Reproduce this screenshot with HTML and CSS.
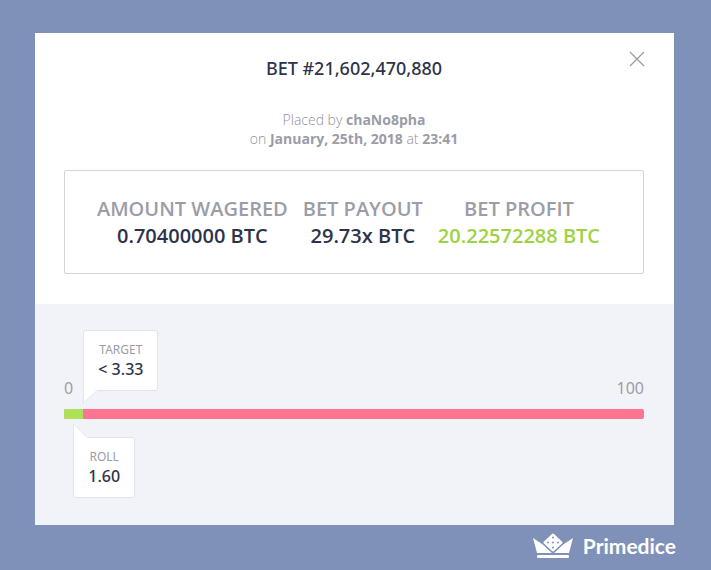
FILE: index.html
```html
<!DOCTYPE html>
<html lang="en">
<head>
    <meta charset="UTF-8">
    <meta name="viewport" content="width=device-width, initial-scale=1.0">
    <title>Primedice - Bet #21,602,470,880</title>
    <link rel="stylesheet" href="styles.css">
</head>
<body>
    <main class="modal">
        <div class="details">
            <button class="close" type="button" aria-label="Close">
                <svg width="16" height="16" viewBox="0 0 16 16"><path d="M1 1L15 15M15 1L1 15" fill="none" stroke="#9699a6" stroke-width="1.2"/></svg>
            </button>
            <h1>BET #21,602,470,880</h1>
            <p class="placed">
                Placed by <b>chaNo8pha</b><br>
                on <b>January, 25th, 2018</b> at <b>23:41</b>
            </p>
            <dl class="stats">
                <div>
                    <dt>AMOUNT WAGERED</dt>
                    <dd>0.70400000 BTC</dd>
                </div>
                <div>
                    <dt>BET PAYOUT</dt>
                    <dd>29.73x BTC</dd>
                </div>
                <div>
                    <dt>BET PROFIT</dt>
                    <dd class="profit">20.22572288 BTC</dd>
                </div>
            </dl>
        </div>
        <div class="roll-area">
            <div class="scale">
                <span>0</span>
                <span>100</span>
            </div>
            <div class="track">
                <div class="bar">
                    <div class="win" style="width: 3.33%"></div>
                </div>
                <div class="callout target" style="left: 3.33%">
                    <span>TARGET</span>
                    <strong>&lt; 3.33</strong>
                    <svg class="tail" width="14" height="14" viewBox="0 0 14 14"><path d="M0 0H14V1L0.500 13.500Z" fill="#fff"/><path d="M0.500 0V13L13.500 1" fill="none" stroke="#e2e4eb"/></svg>
                </div>
                <div class="callout roll" style="left: 1.6%">
                    <span>ROLL</span>
                    <strong>1.60</strong>
                    <svg class="tail" width="14" height="15" viewBox="0 0 14 15"><path d="M0 15H14V14L0.500 0.500Z" fill="#fff"/><path d="M0.500 15V1L13.500 14" fill="none" stroke="#e2e4eb"/></svg>
                </div>
            </div>
        </div>
    </main>
    <footer class="brand">
        <svg width="40" height="26" viewBox="0 0 40 26" fill="#fff">
            <path d="M0 5L12 13Q20 24 28 13L40 5L36 20H4Z"/>
            <path d="M20 1L29.500 10L20 19L10.500 10Z" fill="#8091b9" stroke="#8091b9" stroke-width="3" stroke-linejoin="round"/>
            <path d="M20 2L28 9.500L20 17L12 9.500Z" stroke="#fff" stroke-width="3" stroke-linejoin="round"/>
            <g fill="#8091b9">
                <circle cx="20" cy="4.500" r="1"/>
                <circle cx="15" cy="9.500" r="1"/>
                <circle cx="20" cy="9.500" r="1"/>
                <circle cx="25" cy="9.500" r="1"/>
                <circle cx="20" cy="14.500" r="1"/>
            </g>
            <rect x="4" y="22" width="32" height="3" rx="1"/>
        </svg>
        <span>Primedice</span>
    </footer>
</body>
</html>
```
FILE: styles.css
```css
* {
    box-sizing: border-box;
}
body {
    font-family: "Noto Sans", "Open Sans", sans-serif;
    background-color: #8091b9;
    color: #2f3349;
    margin: 0;
    padding: 33px 37px 0 35px;
}
.modal {
    background-color: #fff;
}
.details {
    position: relative;
    padding: 23px 30px 30px 29px;
    text-align: center;
}
.close {
    position: absolute;
    top: 18px;
    right: 29px;
    width: 16px;
    height: 16px;
    padding: 0;
    border: none;
    background: none;
    cursor: pointer;
}
.close svg {
    display: block;
}
h1 {
    margin: 0;
    font-size: 18px;
    font-weight: 500;
    line-height: 24px;
}
.placed {
    margin: 30px 0 22px;
    font-family: "Open Sans", sans-serif;
    font-size: 14px;
    font-weight: 300;
    line-height: 19px;
    color: #8f929d;
}
.placed b {
    font-weight: 700;
    color: #9a9ca7;
}
.stats {
    display: flex;
    justify-content: center;
    gap: 15px;
    margin: 0;
    padding: 24px 11px 24px 0;
    border: 1px solid #d3d4d9;
    border-radius: 2px;
    font-family: "Open Sans", sans-serif;
    font-size: 20px;
    font-weight: 600;
    line-height: 27px;
}
.stats dt {
    color: #9b9da7;
}
.stats dd {
    margin: 0;
}
.stats .profit {
    color: #9dd343;
}

/* Roll bar */
.roll-area {
    padding: 72px 30px 106px 29px;
    background-color: #f2f3f8;
}
.scale {
    display: flex;
    justify-content: space-between;
    margin-bottom: 9px;
    font-size: 16px;
    line-height: 24px;
    color: #9b9da7;
}
.track {
    position: relative;
}
.bar {
    height: 10px;
    border-radius: 2px;
    background-color: #ff7591;
    overflow: hidden;
}
.win {
    height: 100%;
    background-color: #aee05a;
}
.callout {
    position: absolute;
    padding: 9px 14px 11px;
    border: 1px solid #e2e4eb;
    border-radius: 3px;
    background-color: #fff;
    text-align: center;
    white-space: nowrap;
}
.callout span,
.callout strong {
    display: block;
}
.callout span {
    font-size: 12px;
    line-height: 20px;
    color: #9b9da7;
}
.callout strong {
    font-size: 16px;
    font-weight: 500;
    line-height: 19px;
}
.tail {
    position: absolute;
    left: -1px;
}
.target {
    bottom: 28px;
    border-bottom-left-radius: 0;
}
.target .tail {
    top: 100%;
}
.roll {
    top: 28px;
    border-top-left-radius: 0;
}
.roll .tail {
    bottom: 100%;
}

.brand {
    display: flex;
    justify-content: flex-end;
    align-items: center;
    gap: 10px;
    margin-right: -2px;
    padding-top: 7px;
    color: #fff;
    font-family: Lato, sans-serif;
    font-size: 21px;
    font-weight: 700;
    line-height: 28px;
}
```
